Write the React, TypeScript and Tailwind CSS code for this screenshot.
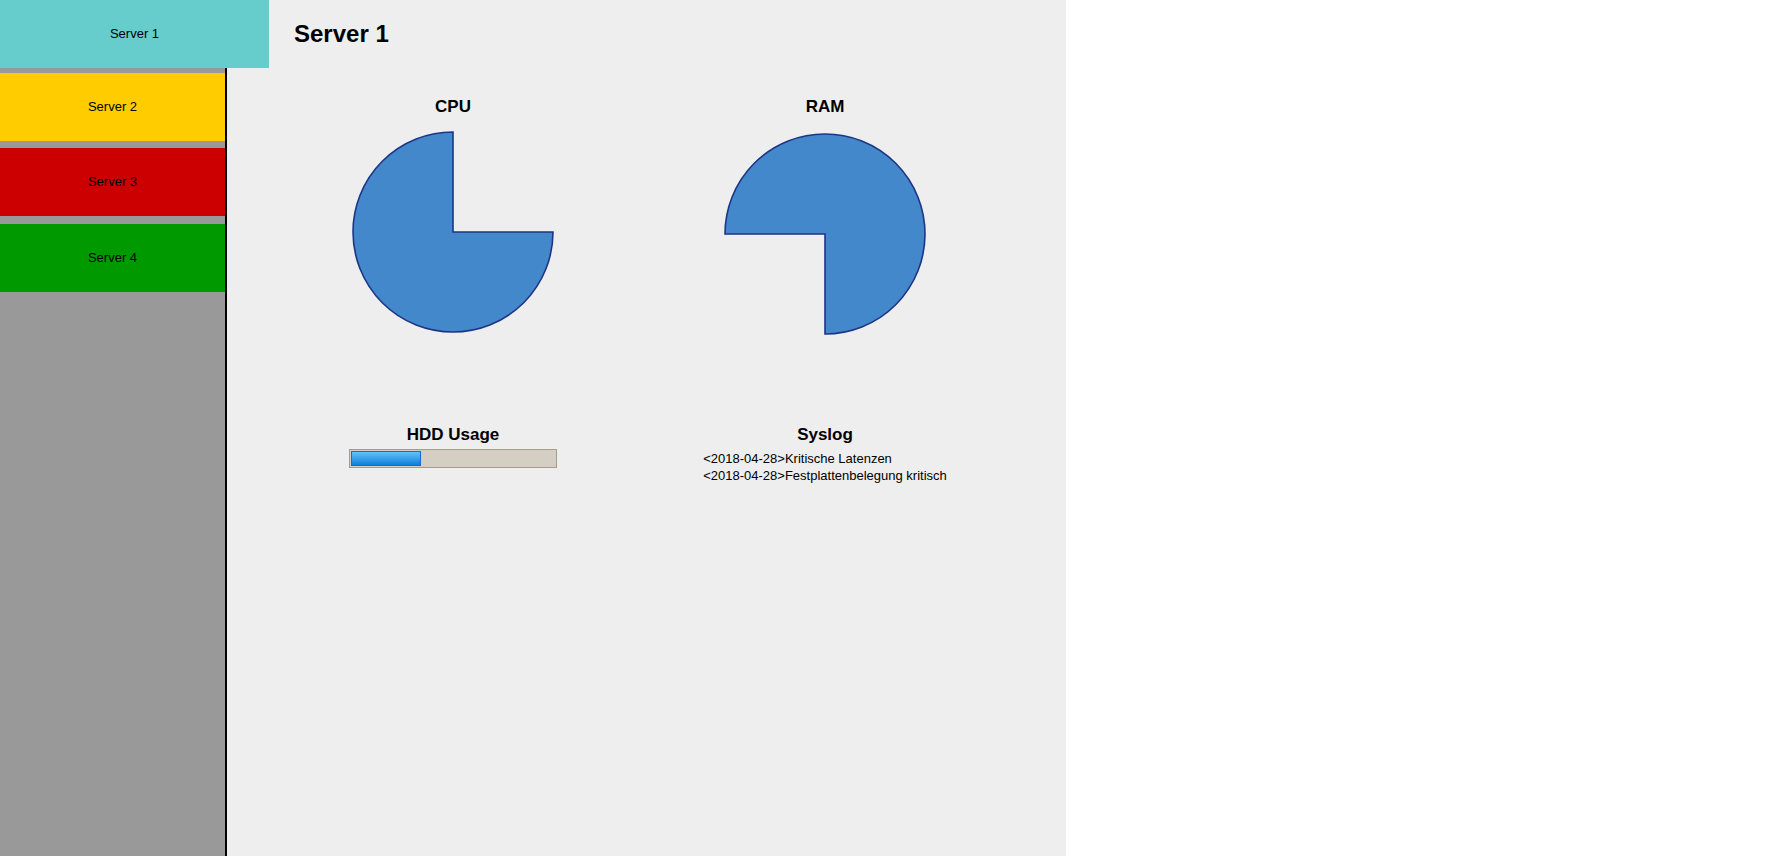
import React from "react";

const servers = [
  { name: "Server 1", cls: "bg-[#66cccc] w-[269px] h-[68px] relative z-10" },
  { name: "Server 2", cls: "bg-[#ffcc00] w-full h-[68px] mt-[5px]" },
  { name: "Server 3", cls: "bg-[#cc0000] w-full h-[68px] mt-[7px]" },
  { name: "Server 4", cls: "bg-[#009900] w-full h-[68px] mt-[8px]" },
];

const syslog = [
  "<2018-04-28>Kritische Latenzen",
  "<2018-04-28>Festplattenbelegung kritisch",
];

function Pie({ d }: { d: string }) {
  return (
    <svg width="204" height="204" viewBox="0 0 204 204">
      <path d={d} fill="#4488cc" stroke="#1d3585" strokeWidth="1.6" strokeLinejoin="miter" />
    </svg>
  );
}

export default function App() {
  return (
    <div className="flex h-[856px] w-full bg-white font-['Liberation_Sans',Arial,sans-serif] text-black">
      {/* sidebar */}
      <div className="w-[227px] shrink-0 bg-[#999999] border-r-2 border-black">
        {servers.map((s) => (
          <div key={s.name} className={`flex items-center justify-center text-[13px] ${s.cls}`}>
            {s.name}
          </div>
        ))}
      </div>

      {/* main */}
      <div className="w-[839px] shrink-0 bg-[#eeeeee]">
        <div className="h-[68px] flex items-center pl-[67px]">
          <h1 className="text-[24px] font-bold">Server 1</h1>
        </div>
        <div className="grid grid-cols-[372px_372px] grid-rows-[328px_auto] pl-[40px] pt-[29px]">
          <div className="flex flex-col items-center">
            <h2 className="text-[17px] leading-[20px] font-bold">CPU</h2>
            <div className="mt-[13px]">
              <Pie d="M102,102 L102,2 A100,100 0 1,0 202,102 Z" />
            </div>
          </div>
          <div className="flex flex-col items-center">
            <h2 className="text-[17px] leading-[20px] font-bold">RAM</h2>
            <div className="mt-[15px]">
              <Pie d="M102,102 L2,102 A100,100 0 1,1 102,202 Z" />
            </div>
          </div>
          <div className="flex flex-col items-center">
            <h2 className="text-[17px] leading-[20px] font-bold">HDD Usage</h2>
            <div className="mt-[4px] w-[208px] h-[19px] border border-[#a59c8e] bg-[#d5cec3] p-[1px]">
              <div className="h-full w-[70px] border border-[#1e63e0] bg-linear-to-b from-[#5cc4f8] to-[#0a7fd6]" />
            </div>
          </div>
          <div className="flex flex-col items-center">
            <h2 className="text-[17px] leading-[20px] font-bold">Syslog</h2>
            <div className="mt-[5px] text-[13px] leading-[17px] text-left">
              {syslog.map((l) => (
                <div key={l}>{l}</div>
              ))}
            </div>
          </div>
        </div>
      </div>
    </div>
  );
}
